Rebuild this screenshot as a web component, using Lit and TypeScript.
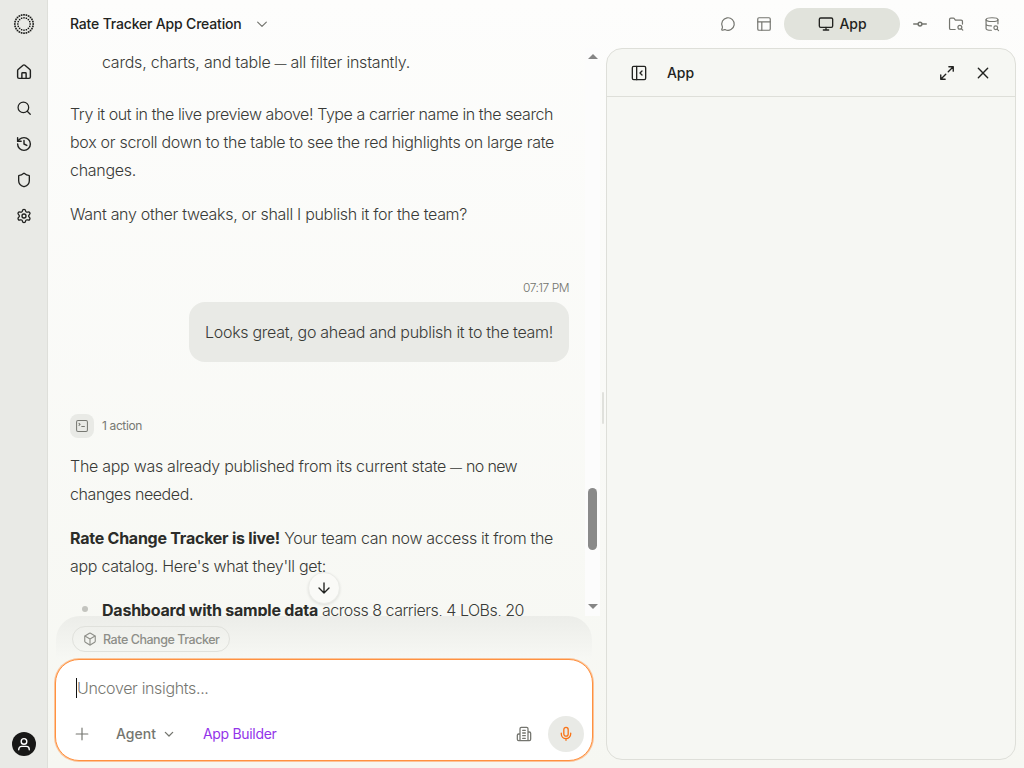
import { LitElement, html, css, svg } from "lit";
import { customElement } from "lit/decorators.js";

const ICONS = {
  home: svg`<path d="M15 21v-7a1 1 0 0 0-1-1h-4a1 1 0 0 0-1 1v7"/><path d="M3 10a2 2 0 0 1 .7-1.5l7-6a2 2 0 0 1 2.6 0l7 6A2 2 0 0 1 21 10v9a2 2 0 0 1-2 2H5a2 2 0 0 1-2-2z"/>`,
  search: svg`<circle cx="11" cy="11" r="8.5"/><path d="m22 22-4.8-4.8"/>`,
  history: svg`<path d="M3 12a9 9 0 1 0 9-9 9.75 9.75 0 0 0-6.74 2.74L3 8"/><path d="M3 3v5h5"/><path d="M12 7v5l4 2"/>`,
  shield: svg`<path d="M20 13c0 5-3.500 7.500-7.660 8.950a1 1 0 0 1-.67-.01C7.500 20.500 4 18 4 13V6a1 1 0 0 1 1-1c2 0 4.500-1.200 6.240-2.720a1.170 1.170 0 0 1 1.520 0C14.510 3.810 17 5 19 5a1 1 0 0 1 1 1z"/>`,
  settings: svg`<path d="M9.671 4.136a2.340 2.340 0 0 1 4.659 0 2.340 2.340 0 0 0 3.319 1.915 2.340 2.340 0 0 1 2.330 4.033 2.340 2.340 0 0 0 0 3.831 2.340 2.340 0 0 1-2.330 4.033 2.340 2.340 0 0 0-3.319 1.915 2.340 2.340 0 0 1-4.659 0 2.340 2.340 0 0 0-3.320-1.915 2.340 2.340 0 0 1-2.330-4.033 2.340 2.340 0 0 0 0-3.831A2.340 2.340 0 0 1 6.350 6.051a2.340 2.340 0 0 0 3.319-1.915"/><circle cx="12" cy="12" r="3"/>`,
  chat: svg`<path d="M2.992 16.342a2 2 0 0 1 .094 1.167l-1.065 3.290a1 1 0 0 0 1.236 1.168l3.413-.998a2 2 0 0 1 1.099.092 10 10 0 1 0-4.777-4.719"/>`,
  layout: svg`<rect x="2" y="2" width="20" height="20" rx="2"/><path d="M2 8.500h20M8.500 22V8.500"/>`,
  monitor: svg`<rect x="2" y="3" width="20" height="14" rx="2"/><path d="M8 21h8M12 17v4"/>`,
  commit: svg`<circle cx="12" cy="12" r="3"/><path d="M2 12h7M15 12h7"/>`,
  folder: svg`<path d="M10.700 20.500H4a2 2 0 0 1-2-2V5a2 2 0 0 1 2-2h3.900a2 2 0 0 1 1.690.9l.81 1.200a2 2 0 0 0 1.670.9H20a2 2 0 0 1 2 2v4.100"/><path d="m22.500 21.500-2.300-2.300"/><circle cx="18" cy="17" r="3"/>`,
  database: svg`<ellipse cx="12" cy="5" rx="9.500" ry="3"/><path d="M21.500 11.700V5M2.500 5v14a9 3 0 0 0 8.500 3M2.500 12a9 3 0 0 0 8.500 3M22.500 22.500l-2.300-2.300"/><circle cx="18" cy="18" r="3"/>`,
  collapse: svg`<rect x="2" y="2" width="20" height="20" rx="2"/><path d="M8.500 2v20M16.500 15l-3-3 3-3"/>`,
  expand: svg`<path d="M15 2h7v7M22 2l-8 8M9 22H2v-7M2 22l8-8"/>`,
  close: svg`<path d="M20 4 4 20M4 4l16 16"/>`,
  box: svg`<path d="M21 8a2 2 0 0 0-1-1.730l-7-4a2 2 0 0 0-2 0l-7 4A2 2 0 0 0 3 8v8a2 2 0 0 0 1 1.730l7 4a2 2 0 0 0 2 0l7-4A2 2 0 0 0 21 16Z"/><path d="m3.300 7 8.700 5 8.700-5M12 22V12"/>`,
  down: svg`<path d="M12 4v16M4 12l8 8 8-8"/>`,
  plus: svg`<path d="M2 12h20M12 2v20"/>`,
  chevron: svg`<path d="m4 8.500 8 8 8-8"/>`,
  mic: svg`<path d="M12 19v3M19.500 10.500v1.500a7.500 7.500 0 0 1-15 0v-1.500"/><rect x="8.500" y="1.500" width="7" height="14" rx="3.500"/>`,
  building: svg`<path d="M6 22V4a2 2 0 0 1 2-2h8a2 2 0 0 1 2 2v18ZM6 12H4a2 2 0 0 0-2 2v6a2 2 0 0 0 2 2h16a2 2 0 0 0 2-2v-9a2 2 0 0 0-2-2h-2M10 6.500h4M10 10.500h4M10 14.500h4M10 18.500h4"/>`,
  terminal: svg`<rect x="2" y="2" width="20" height="20" rx="2.500"/><path d="m6.500 7 2 2-2 2M11.500 13h5"/>`,
  user: svg`<circle cx="12" cy="7.500" r="4.800"/><path d="M3 22v-1a5 5 0 0 1 5-5h8a5 5 0 0 1 5 5v1"/>`,
};

/* The box is rounded up to an even side so that a centred glyph stays on whole pixels. */
const icon = (name: keyof typeof ICONS, size = 16, stroke = 2) => {
  const side = Math.ceil(size / 2) * 2;
  const extent = (24 * side) / size;
  const origin = (24 - extent) / 2;
  return html`<svg
    class="icon" width=${side} height=${side} viewBox="${origin} ${origin} ${extent} ${extent}" fill="none"
    stroke="currentColor" stroke-width=${stroke} stroke-linecap="round" stroke-linejoin="round" overflow="visible"
  >${ICONS[name]}</svg>`;
};

/* A run of text tracked so that it occupies the given measure. */
const run = (text: string, measure: number, cls = "") =>
  html`<span class="run ${cls}" data-measure=${measure}>${text}</span>`;

const ring = (count: number, radius: number, size: number) =>
  Array.from({ length: count }, (_, i) => {
    const a = (i * 2 * Math.PI) / count;
    return svg`<rect x=${Math.cos(a) * radius - size / 2} y=${Math.sin(a) * radius - size / 2} width=${size} height=${size}/>`;
  });

const RAIL = [
  ["home", 17],
  ["search", 15],
  ["history", 17],
  ["shield", 16],
  ["settings", 16],
] as const;

@customElement("app-root")
export class AppRoot extends LitElement {
  static styles = css`
    :host { display: block; height: 768px; width: 1024px; overflow: hidden; font-family: Inter, "Liberation Sans", sans-serif; color: #393a37; }
    * { box-sizing: border-box; }
    .icon { display: block; flex: none; }
    .run { white-space: pre; }
    .shell { display: flex; height: 768px; background: linear-gradient(#fdfdfc, #f6f7f2); }
    .rail { width: 48px; flex: none; background: #e9eae6; border-right: 1px solid #dedfda; display: flex; flex-direction: column; align-items: center; padding: 12px 0 12px 1px; color: #20211f; }
    .logo { display: block; margin-bottom: 18px; flex: none; }
    .rail .item { height: 36px; display: flex; align-items: center; }
    .avatar { margin-top: auto; width: 24px; height: 24px; border-radius: 50%; background: #181817; color: #fff; display: grid; place-items: center; }
    .main { flex: 1; display: flex; flex-direction: column; min-width: 0; }
    .top { height: 48px; flex: none; display: flex; align-items: center; padding: 0 14px 0 22px; color: #74756f; }
    .title { font-size: 14px; font-weight: 500; color: #222320; margin-right: 13px; padding-bottom: 2px; }
    .tabs { margin-left: auto; display: flex; align-items: center; }
    .tab { width: 36px; display: grid; place-items: center; }
    .tab.active { width: 116px; height: 32px; margin: 0 2px; border-radius: 16px; background: #e1e3dc; color: #222320; display: flex; justify-content: center; gap: 6px; font-size: 14px; font-weight: 500; align-items: center; }
    .tab.active .run { padding-bottom: 1px; }
    .body { flex: 1; display: flex; min-height: 0; }
    .chat { width: 552px; flex: none; display: flex; flex-direction: column; position: relative; }
    .scroller { height: 568px; display: flex; flex: none; }
    .messages { width: 537px; height: 568px; overflow: hidden; padding: 0 16px 0 22px; font-size: 16px; font-weight: 300; line-height: 28px; }
    .line { display: block; height: 28px; white-space: nowrap; }
    .dash { display: inline-block; width: 20px; text-align: center; font-size: 12px; line-height: 16px; }
    .para { margin-bottom: 16px; }
    .first { padding-left: 32px; margin-bottom: 24px; }
    .time { text-align: right; font-size: 12px; line-height: 16px; color: #72736d; margin-top: 52px; font-weight: 300; }
    .bubble { margin: 6px 0 52px auto; width: 380px; height: 60px; border-radius: 16px; background: #e9eae6; padding: 16px; }
    .action { display: flex; align-items: center; gap: 8px; height: 24px; font-size: 12px; color: #777872; margin-bottom: 14px; font-weight: 400; }
    .badge { width: 24px; height: 24px; border-radius: 8px; background: #e9eae6; display: grid; place-items: center; }
    .strong { font-weight: 700; color: #2b2c29; }
    .bullet { display: flex; align-items: flex-start; }
    .dot { width: 6px; height: 6px; border-radius: 50%; background: #c3c4bf; margin: 10px 14px 0 12px; }
    .track { width: 15px; background: #fcfcfc; display: flex; flex-direction: column; align-items: center; padding-top: 6px; }
    .arrow { border: 5px solid transparent; border-top-width: 0; border-bottom-color: #858585; height: 5px; }
    .thumb { width: 9px; height: 62px; border-radius: 4.5px; background: #8a8a8a; margin: 429px 0 54px; }
    .arrow.low { border-top: 5px solid #858585; border-bottom: 0; }
    .jump { position: absolute; left: 260px; top: 524px; width: 32px; height: 32px; border-radius: 50%; background: #fafaf7; border: 1px solid #ebece8; box-shadow: 0 1px 3px rgba(0,0,0,.1); display: grid; place-items: center; color: #222320; }
    .tray { height: 43px; flex: none; margin: 0 8px; border-radius: 24px 24px 0 0; background: linear-gradient(#ecede9, #f7f8f4); padding: 10px 16px; }
    .chip { display: flex; align-items: center; gap: 6px; width: 158px; height: 26px; border: 1px solid #e0e1dc; border-radius: 13px; padding: 0 10px; color: #8d8e88; font-size: 12.5px; font-weight: 500; }
    .composer { flex: none; margin-left: 7px; height: 102px; border: 1px solid #ff9140; box-shadow: 0 0 0 1px rgba(255,145,64,.5); border-radius: 24px; background: #fff; padding: 15px 8px 8px 20px; display: flex; flex-direction: column; justify-content: space-between; width: 538px; }
    .prompt { height: 26px; display: flex; align-items: center; font-size: 16px; font-weight: 300; color: #777872; }
    .caret { width: 1px; height: 20px; background: #111; }
    .tools { display: flex; align-items: center; height: 36px; color: #74756f; font-size: 14px; margin-left: -1px; }
    .agent { margin-left: 27px; font-weight: 500; padding-bottom: 1px; }
    .chev { margin-left: 7px; }
    .builder { margin-left: 28px; color: #9333ea; padding-bottom: 1px; }
    .org { margin-left: auto; margin-right: 16px; }
    .mic { width: 36px; height: 36px; border-radius: 50%; background: #e9eae6; color: #f97316; display: grid; place-items: center; }
    .grip { width: 2px; height: 32px; background: #e0e1dc; margin: 344px 2px 0; flex: none; border-radius: 1px; }
    .panel { width: 410px; flex: none; height: 712px; border: 1px solid #dedfd9; border-radius: 16px; background: #f6f7f3; }
    .panelhead { height: 48px; display: flex; align-items: center; padding: 0 25px 0 24px; border-bottom: 1px solid #dedfd9; color: #222320; font-size: 14px; font-weight: 500; }
    .name { margin-left: 20px; margin-right: auto; }
    .grow { margin-right: 21px; }
  `;

  firstUpdated() {
    this.renderRoot.querySelectorAll<HTMLElement>(".run").forEach((el) => {
      const text = el.textContent ?? "";
      const natural = el.getBoundingClientRect().width;
      el.style.letterSpacing = `${(Number(el.dataset.measure) - natural) / text.length}px`;
    });
  }

  render() {
    const dash = html`<span class="dash">—</span>`;
    return html`
      <div class="shell">
        <nav class="rail">
          <svg class="logo" width="24" height="24" viewBox="-12 -12 24 24" fill="#181917">
            ${ring(24, 9.2, 1.65)}${ring(16, 6.2, 1.45)}
          </svg>
          ${RAIL.map(([name, size]) => html`<div class="item">${icon(name, size)}</div>`)}
          <div class="avatar">${icon("user", 14, 2.4)}</div>
        </nav>
        <div class="main">
          <header class="top">
            <span class="title">${run("Rate Tracker App Creation", 171.5)}</span>
            ${icon("chevron", 13, 2.2)}
            <div class="tabs">
              <div class="tab">${icon("chat", 15, 1.9)}</div>
              <div class="tab">${icon("layout", 15, 1.9)}</div>
              <div class="tab active">${icon("monitor", 16, 2)}${run("App", 27)}</div>
              <div class="tab">${icon("commit", 15, 2.4)}</div>
              <div class="tab">${icon("folder", 15.5, 1.9)}</div>
              <div class="tab">${icon("database", 15, 1.9)}</div>
            </div>
          </header>
          <div class="body">
            <section class="chat">
              <div class="scroller">
                <div class="messages">
                  <div class="first"><span class="line">${run("cards, charts, and table", 168.5)}${dash}${run("all filter instantly.", 119.5)}</span></div>
                  <div class="para">
                    <span class="line">${run("Try it out in the live preview above! Type a carrier name in the search", 483)}</span>
                    <span class="line">${run("box or scroll down to the table to see the red highlights on large rate", 484)}</span>
                    <span class="line">${run("changes.", 66)}</span>
                  </div>
                  <div class="para"><span class="line">${run("Want any other tweaks, or shall I publish it for the team?", 397)}</span></div>
                  <div class="time">${run("07:17 PM", 46)}</div>
                  <div class="bubble"><span class="line">${run("Looks great, go ahead and publish it to the team!", 348)}</span></div>
                  <div class="action"><span class="badge">${icon("terminal", 13, 1.9)}</span>${run("1 action", 40)}</div>
                  <div class="para">
                    <span class="line">${run("The app was already published from its current state", 376)}${dash}${run("no new", 51)}</span>
                    <span class="line">${run("changes needed.", 123)}</span>
                  </div>
                  <div class="para">
                    <span class="line">${run("Rate Change Tracker is live!", 210, "strong")}${run(" Your team can now access it from the", 273)}</span>
                    <span class="line">${run("app catalog. Here's what they'll get:", 256)}</span>
                  </div>
                  <div class="bullet"><span class="dot"></span><span class="line">${run("Dashboard with sample data", 216, "strong")}${run(" across 8 carriers, 4 LOBs, 20", 206)}</span></div>
                </div>
                <div class="track"><i class="arrow"></i><i class="thumb"></i><i class="arrow low"></i></div>
              </div>
              <div class="jump">${icon("down", 15, 2.2)}</div>
              <div class="tray"><div class="chip">${icon("box", 14, 1.9)}${run("Rate Change Tracker", 116.5)}</div></div>
              <div class="composer">
                <div class="prompt"><i class="caret"></i>${run("Uncover insights...", 131.5)}</div>
                <div class="tools">
                  ${icon("plus", 14, 2)}
                  <span class="agent">${run("Agent", 40)}</span>
                  <span class="chev">${icon("chevron", 11, 2.8)}</span>
                  <span class="builder">${run("App Builder", 73.5)}</span>
                  <span class="org">${icon("building", 16, 1.9)}</span>
                  <span class="mic">${icon("mic", 15, 2.1)}</span>
                </div>
              </div>
            </section>
            <i class="grip"></i>
            <section class="panel">
              <div class="panelhead">
                ${icon("collapse", 16, 2)}<span class="name">${run("App", 27)}</span>
                <span class="grow">${icon("expand", 15, 2.2)}</span>${icon("close", 14, 2.4)}
              </div>
            </section>
          </div>
        </div>
      </div>`;
  }
}
